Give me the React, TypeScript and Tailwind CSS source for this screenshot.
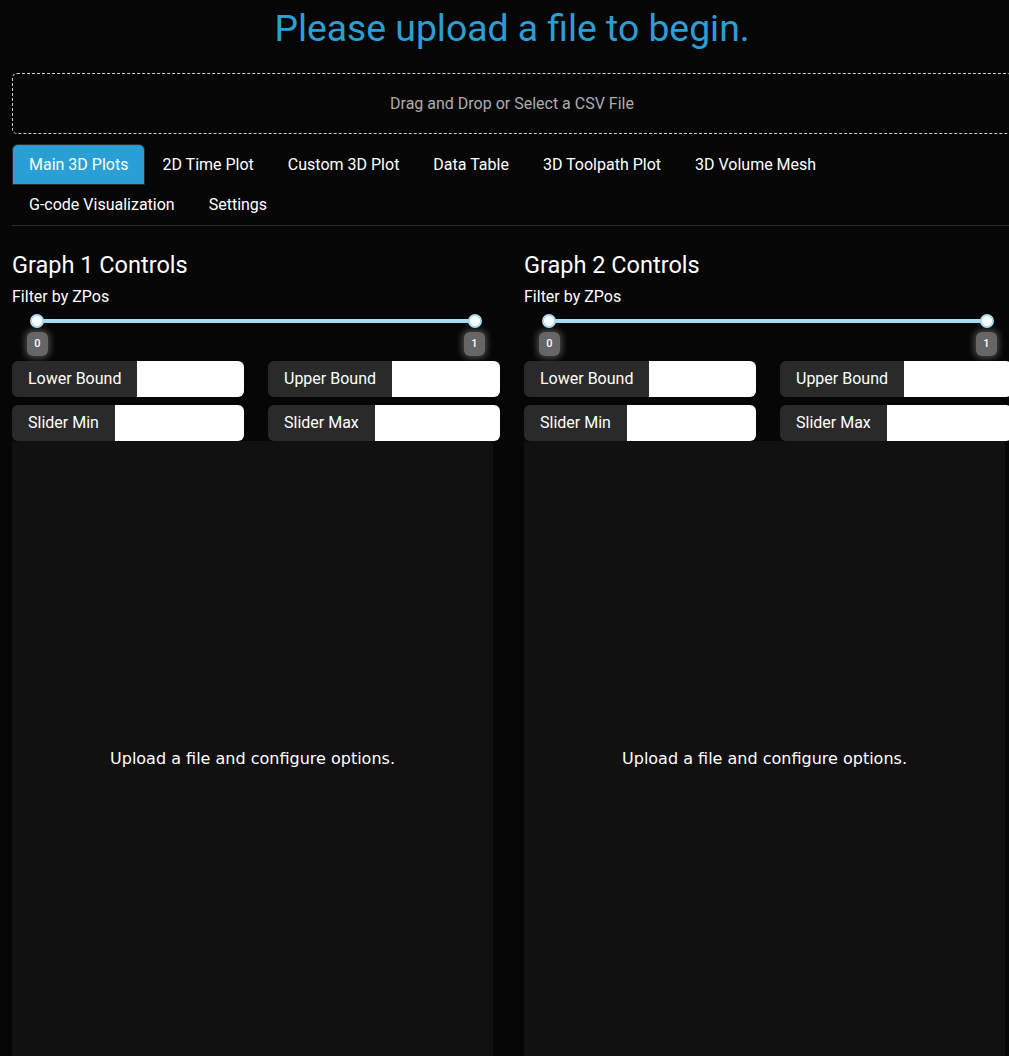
import React from 'react';

const TABS = [
  'Main 3D Plots',
  '2D Time Plot',
  'Custom 3D Plot',
  'Data Table',
  '3D Toolpath Plot',
  '3D Volume Mesh',
  'G-code Visualization',
  'Settings',
];

function InputGroup({ label }: { label: string }) {
  return (
    <div className="flex h-9 rounded-md overflow-hidden">
      <span className="flex items-center px-4 bg-[#2a2a2a] text-white text-[16px] whitespace-nowrap">{label}</span>
      <input className="flex-1 min-w-0 bg-white outline-none px-2" />
    </div>
  );
}

function Tooltip({ value }: { value: string }) {
  return (
    <div className="w-[21px] h-[24px] rounded-md bg-[#666] text-white text-[11px] font-medium flex items-center justify-center shadow-[0_0_6px_2px_rgba(120,120,120,0.6)]">
      {value}
    </div>
  );
}

function GraphColumn({ n }: { n: number }) {
  return (
    <div className="flex flex-col">
      <h3 className="text-[23.5px] leading-none text-white mt-[28px]">Graph {n} Controls</h3>
      <div className="text-[16px] text-white mt-[11px] leading-none">Filter by ZPos</div>

      {/* range slider */}
      <div className="px-[19px] mt-[9px]">
        <div className="relative h-[14px] flex items-center mx-[6px]">
          <div className="h-[4px] w-full bg-[#a6dcf2] rounded" />
          <div className="absolute -left-[7px] top-0 w-[14px] h-[14px] rounded-full bg-white border-2 border-[#a6dcf2]" />
          <div className="absolute -right-[7px] top-0 w-[14px] h-[14px] rounded-full bg-white border-2 border-[#a6dcf2]" />
        </div>
        <div className="flex justify-between mt-[4px] -mx-[4px]">
          <Tooltip value="0" />
          <Tooltip value="1" />
        </div>
      </div>

      <div className="grid grid-cols-2 gap-x-6 gap-y-2 mt-[5px]">
        <InputGroup label="Lower Bound" />
        <InputGroup label="Upper Bound" />
        <InputGroup label="Slider Min" />
        <InputGroup label="Slider Max" />
      </div>

      <div className="w-[481px] h-[636px] bg-[#111111] flex items-center justify-center">
        <span className="text-white text-[16px] font-['DejaVu_Sans',sans-serif]">Upload a file and configure options.</span>
      </div>
    </div>
  );
}

export default function App() {
  return (
    <div className="w-[1009px] h-[1056px] overflow-hidden bg-[#060606]">
      <div className="w-[1024px] px-3 font-['Roboto',sans-serif]">
        <h1 className="text-center text-[#2a9fd6] text-[37.3px] leading-none pt-[10px]">Please upload a file to begin.</h1>

        <div className="mt-[26px] h-[61px] border border-dashed border-[#cfcfcf] rounded-[5px] flex items-center justify-center text-[16px] text-[#adadad]">
          Drag and Drop or Select a CSV File
        </div>

        {/* tabs */}
        <div className="mt-[10px] border-b border-[#2a2a2a] flex flex-wrap">
          {TABS.map((t, i) => (
            <div
              key={t}
              className={[
                'px-4 h-[40.5px] flex items-center text-[16px] text-white rounded-t-md border',
                i === 0 ? 'bg-[#2a9fd6] border-[#2a2a2a]' : 'border-transparent',
              ].join(' ')}
            >
              {t}
            </div>
          ))}
        </div>

        <div className="grid grid-cols-2 gap-6">
          <GraphColumn n={1} />
          <GraphColumn n={2} />
        </div>
      </div>
    </div>
  );
}
